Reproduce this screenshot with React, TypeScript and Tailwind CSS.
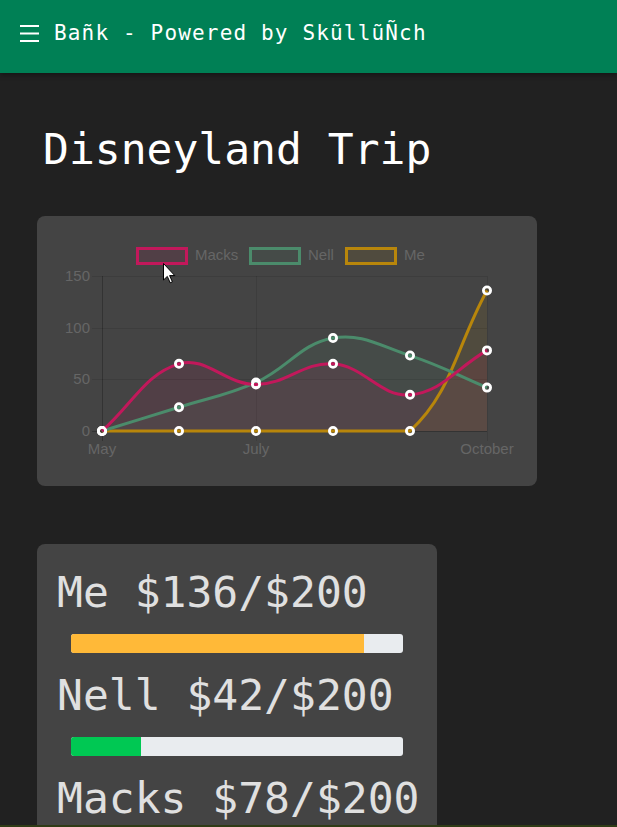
import React from "react";

type Pt = { x: number; y: number };

const XS = [65, 142, 219, 296, 373, 450];
const TOP = 60;
const BOTTOM = 215;
const yv = (v: number) => BOTTOM - (v * (BOTTOM - TOP)) / 150;

const datasets = [
  { label: "Macks", data: [0, 65, 45, 65, 35, 78], color: "#c2185b", fill: "rgba(194,24,91,0.1)" },
  { label: "Nell", data: [0, 23, 47, 90, 73, 42], color: "#4b8b6b", fill: "rgba(76,140,106,0.1)" },
  { label: "Me", data: [0, 0, 0, 0, 0, 136], color: "#b8860b", fill: "rgba(184,134,11,0.1)" },
];

function clamp(v: number, a: number, b: number) {
  return Math.max(a, Math.min(b, v));
}

function linePath(values: number[]) {
  const pts: Pt[] = values.map((v, i) => ({ x: XS[i], y: yv(v) }));
  const t = 0.4;
  const cps = pts.map((p, i) => {
    const prev = pts[i - 1] || p;
    const next = pts[i + 1] || p;
    const d01 = Math.hypot(p.x - prev.x, p.y - prev.y);
    const d12 = Math.hypot(next.x - p.x, next.y - p.y);
    let s01 = d01 / (d01 + d12);
    let s12 = d12 / (d01 + d12);
    if (isNaN(s01)) s01 = 0;
    if (isNaN(s12)) s12 = 0;
    const fa = t * s01;
    const fb = t * s12;
    const c1 = { x: p.x - fa * (next.x - prev.x), y: p.y - fa * (next.y - prev.y) };
    const c2 = { x: p.x + fb * (next.x - prev.x), y: p.y + fb * (next.y - prev.y) };
    c1.x = clamp(c1.x, XS[0], XS[5]);
    c2.x = clamp(c2.x, XS[0], XS[5]);
    c1.y = clamp(c1.y, TOP, BOTTOM);
    c2.y = clamp(c2.y, TOP, BOTTOM);
    return { c1, c2 };
  });
  let d = `M ${pts[0].x} ${pts[0].y}`;
  for (let i = 1; i < pts.length; i++) {
    const a = cps[i - 1].c2;
    const b = cps[i].c1;
    d += ` C ${a.x} ${a.y} ${b.x} ${b.y} ${pts[i].x} ${pts[i].y}`;
  }
  return { d, pts };
}

function Chart() {
  const built = datasets.map((ds) => ({ ...ds, ...linePath(ds.data) }));
  const rev = [...built].reverse();
  const gridYs = [60, 111.67, 163.33];
  const yLabels = [
    { t: "150", y: 60 },
    { t: "100", y: 111.67 },
    { t: "50", y: 163.33 },
    { t: "0", y: 215 },
  ];
  const legend = [
    { label: "Macks", x: 100.5, tx: 158, color: "#c2185b", fill: "rgba(194,24,91,0.1)" },
    { label: "Nell", x: 213.5, tx: 271, color: "#4b8b6b", fill: "rgba(76,140,106,0.1)" },
    { label: "Me", x: 309.5, tx: 367, color: "#b8860b", fill: "rgba(184,134,11,0.1)" },
  ];
  return (
    <svg width="500" height="270" viewBox="0 0 500 270" className="block">
      {legend.map((l) => (
        <g key={l.label}>
          <rect x={l.x} y={32.5} width={49} height={15} fill={l.fill} stroke={l.color} strokeWidth={3} />
          <text x={l.tx} y={44} fontFamily="'Liberation Sans', Arial, sans-serif" fontSize={15} fill="#666">
            {l.label}
          </text>
        </g>
      ))}
      {gridYs.map((y) => (
        <line key={y} x1={55} x2={450} y1={Math.round(y) + 0.5} y2={Math.round(y) + 0.5} stroke="rgba(0,0,0,0.1)" strokeWidth={1} />
      ))}
      {[219, 450].map((x) => (
        <line key={x} x1={x + 0.5} x2={x + 0.5} y1={60} y2={225} stroke="rgba(0,0,0,0.1)" strokeWidth={1} />
      ))}
      <line x1={55} x2={450} y1={215.5} y2={215.5} stroke="rgba(0,0,0,0.25)" strokeWidth={1} />
      <line x1={65.5} x2={65.5} y1={60} y2={225} stroke="rgba(0,0,0,0.25)" strokeWidth={1} />
      {yLabels.map((l) => (
        <text key={l.t} x={53} y={l.y + 5} textAnchor="end" fontFamily="'Liberation Sans', Arial, sans-serif" fontSize={15} fill="#666">
          {l.t}
        </text>
      ))}
      {[
        { t: "May", x: 65 },
        { t: "July", x: 219 },
        { t: "October", x: 450 },
      ].map((l) => (
        <text key={l.t} x={l.x} y={238} textAnchor="middle" fontFamily="'Liberation Sans', Arial, sans-serif" fontSize={15} fill="#666">
          {l.t}
        </text>
      ))}
      {rev.map((ds) => (
        <path key={ds.label + "f"} d={`${ds.d} L 450 215 L 65 215 Z`} fill={ds.fill} stroke="none" />
      ))}
      {rev.map((ds) => (
        <g key={ds.label}>
          <path d={ds.d} fill="none" stroke={ds.color} strokeWidth={3} />
          {ds.pts.map((p, i) => (
            <circle key={i} cx={p.x} cy={p.y} r={3.6} fill={ds.fill} stroke="#fff" strokeWidth={2.8} />
          ))}
        </g>
      ))}
      <path
        d="M126.5 47.5 L126.5 64 L130.3 60.4 L133.2 66.8 L135.4 65.8 L132.6 59.6 L137.8 59.6 Z"
        fill="#fff"
        stroke="#000"
        strokeWidth={1}
        strokeLinejoin="miter"
      />
    </svg>
  );
}

const rows = [
  { label: "Me $136/$200", fill: "w-[293px]", color: "bg-[#ffb938]" },
  { label: "Nell $42/$200", fill: "w-[70px]", color: "bg-[#00c853]" },
  { label: "Macks $78/$200", fill: "w-[0px]", color: "bg-[#e91e63]" },
];

export default function App() {
  return (
    <div className="h-[827px] overflow-hidden flex flex-col bg-[#212121] font-['DejaVu_Sans_Mono',monospace]">
      <header className="h-[73px] shrink-0 bg-[#008055] flex items-start pt-[21px] pl-[20px] shadow-[0_2px_5px_rgba(0,0,0,0.35)] relative z-10">
        <svg width="19" height="17" viewBox="0 0 19 17" className="mt-[4px] shrink-0">
          <rect x="0" y="0" width="19" height="2" fill="#fff" />
          <rect x="0" y="7.5" width="19" height="2" fill="#fff" />
          <rect x="0" y="15" width="19" height="2" fill="#fff" />
        </svg>
        <span className="ml-[15px] text-white text-[21px] leading-[25px] tracking-[1.16px] whitespace-nowrap">
          Bañk - Powered by SkũllũÑch
        </span>
      </header>
      <main className="flex-1 min-h-0 overflow-hidden px-[37px]">
        <h1 className="mt-[51px] pl-[6px] text-white text-[43px] leading-[50px] font-normal whitespace-nowrap">
          Disneyland Trip
        </h1>
        <div className="mt-[42px] w-[500px] h-[270px] rounded-[8px] bg-[#444444] overflow-hidden">
          <Chart />
        </div>
        <div className="mt-[58px] w-[400px] rounded-[8px] bg-[#444444] pt-[23px] pl-[20px] pb-[20px]">
          {rows.map((r) => (
            <div key={r.label}>
              <div className="text-[#e0e0e0] text-[43px] leading-[50px] whitespace-nowrap">{r.label}</div>
              <div className="mt-[17px] mb-[17px] ml-[14px] w-[332px] h-[19px] rounded-[3px] bg-[#e9ecef] overflow-hidden">
                <div className={`h-full ${r.fill} ${r.color}`} />
              </div>
            </div>
          ))}
        </div>
      </main>
      <div className="h-[2px] shrink-0 bg-[#2f3b16]" />
    </div>
  );
}
